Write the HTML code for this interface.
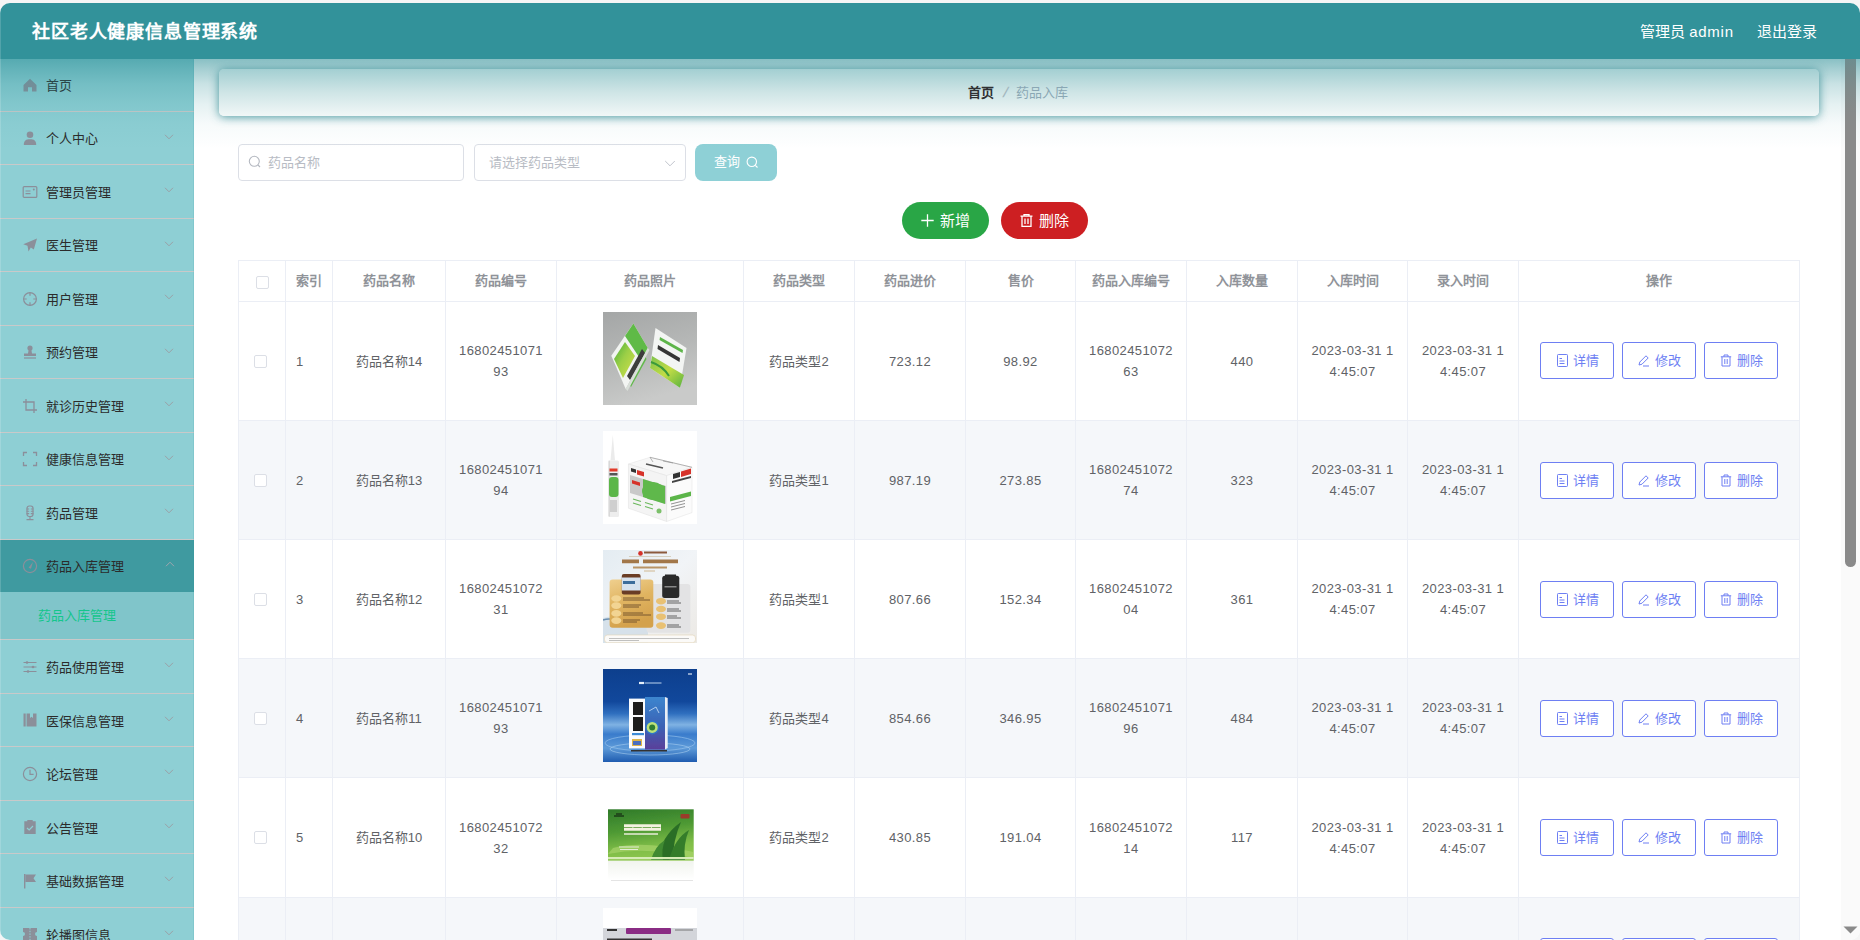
<!DOCTYPE html>
<html lang="zh-CN"><head><meta charset="utf-8"><title>社区老人健康信息管理系统</title>
<style>
*{box-sizing:border-box;margin:0;padding:0}
html,body{width:1860px;height:940px;overflow:hidden;background:#f5f5f5;font-family:"Liberation Sans",sans-serif;}
.a{position:absolute}
#app{position:absolute;left:0;top:3px;width:1860px;height:937px;border-radius:10px;overflow:hidden;background:#fff}
#hdr{position:absolute;left:0;top:0;width:1860px;height:56px;background:#32929a;z-index:5}
#title{position:absolute;left:32px;top:17.8px;font-size:18px;letter-spacing:.85px;font-weight:bold;color:#fff;line-height:22px;white-space:nowrap;text-shadow:0 0 1px rgba(255,255,255,.3)}
.hr{position:absolute;top:19px;font-size:15px;color:#fff;line-height:20px;white-space:nowrap}
#side{position:absolute;left:0;top:56px;width:194px;height:881px;background:#8ecfd4;overflow:hidden}
.mi{position:absolute;left:0;width:194px}
.mt{position:absolute;left:46px;font-size:13px;color:#2b2b2b;line-height:16px;white-space:nowrap}
.sep{position:absolute;left:0;width:194px;height:1px;background:#c9c9c9}
.ico{position:absolute;left:22px;width:16px;height:16px}
.chev{position:absolute;left:164px;width:10px;height:6px}
#main{position:absolute;left:194px;top:56px;width:1647px;height:881px;background:#fff;overflow:hidden}
.shade{position:absolute;left:0;top:56px;width:1860px;height:110px;z-index:4;pointer-events:none;
 background:linear-gradient(to bottom,rgba(40,140,148,.55) 0px,rgba(40,140,148,.42) 10px,rgba(40,140,148,.25) 25px,rgba(40,140,148,.12) 45px,rgba(40,140,148,.04) 65px,rgba(40,140,148,0) 90px)}
#bc{position:absolute;left:25px;top:10px;width:1600px;height:47px;border-radius:5px;
 background:linear-gradient(to bottom,#a3cfd2 0%,#cfe5e6 50%,#f1f7f7 100%);box-shadow:0 1px 10px rgba(45,135,145,.85);z-index:6}
.inp{position:absolute;border:1px solid #dcdfe6;border-radius:4px;background:#fff;height:37px}
.ph{position:absolute;font-size:13px;color:#b8bcc4;line-height:16px;white-space:nowrap}
.btn{position:absolute;height:37px;color:#fff;font-size:13px;line-height:16px;white-space:nowrap}
.th{position:absolute;font-size:13px;font-weight:bold;color:#909399;line-height:16px;white-space:nowrap;text-align:center}
.td{position:absolute;font-size:13px;color:#606266;line-height:21px;white-space:nowrap;text-align:center}
.num{letter-spacing:.4px}
.vl{position:absolute;width:1px;background:#ebeef5}
.hl{position:absolute;height:1px;background:#ebeef5}
.cb{position:absolute;width:14px;height:14px;border:1px solid #dcdfe6;border-radius:2px;background:#fff}
.ob{position:absolute;width:74px;height:37px;border:1px solid #6e7ff3;border-radius:3px;background:#fff;color:#6e7ff3;font-size:13px;line-height:16px;white-space:nowrap}
</style></head><body>
<div id="app">

<div class="a" style="left:0;top:0;width:1px;height:937px;background:rgba(255,255,255,.16);z-index:9"></div>
<div id="hdr"><div id="title">社区老人健康信息管理系统</div>
<div class="hr" style="left:1640px">管理员 <span style="letter-spacing:.75px">admin</span></div><div class="hr" style="left:1757px">退出登录</div></div>
<div id="side">
<svg class="ico" style="top:18.0px;left:22px" viewBox="0 0 16 16"><path d="M1.5 8 L8 1.8 L14.5 8 V14.5 H10 V10.2 H6 V14.5 H1.5Z" fill="#8b8f9a"/></svg>
<div class="mt" style="top:18.5px">首页</div>
<div class="sep" style="top:52.00px"></div>
<svg class="ico" style="top:71.0px;left:22px" viewBox="0 0 16 16"><circle cx="8" cy="4.8" r="3.3" fill="#8b8f9a"/><path d="M1.8 15 C1.8 10.5 4 9.3 8 9.3 C12 9.3 14.2 10.5 14.2 15Z" fill="#8b8f9a"/></svg>
<div class="mt" style="top:72.0px">个人中心</div>
<svg class="chev" style="top:74.8px;left:164px" viewBox="0 0 10 6"><path d="M1 0.8 L5 4.8 L9 0.8" fill="none" stroke="#9aa0a6" stroke-width="1"/></svg>
<div class="sep" style="top:105.00px"></div>
<svg class="ico" style="top:124.5px;left:22px" viewBox="0 0 16 16"><rect x="1.2" y="2.6" width="13.6" height="10.8" rx="1" fill="none" stroke="#8b8f9a" stroke-width="1.2"/><path d="M3.5 7h5M3.5 9.6h5" stroke="#8b8f9a" stroke-width="1.1"/><circle cx="11.8" cy="5.6" r="1" fill="#8b8f9a"/></svg>
<div class="mt" style="top:125.5px">管理员管理</div>
<svg class="chev" style="top:128.3px;left:164px" viewBox="0 0 10 6"><path d="M1 0.8 L5 4.8 L9 0.8" fill="none" stroke="#9aa0a6" stroke-width="1"/></svg>
<div class="sep" style="top:159.00px"></div>
<svg class="ico" style="top:178.0px;left:22px" viewBox="0 0 16 16"><path d="M15 1.5 L1.3 7.2 L5.5 8.8 L6.5 14.5 L8.8 10.5 L11.8 12.5Z" fill="#8b8f9a"/></svg>
<div class="mt" style="top:179.0px">医生管理</div>
<svg class="chev" style="top:181.8px;left:164px" viewBox="0 0 10 6"><path d="M1 0.8 L5 4.8 L9 0.8" fill="none" stroke="#9aa0a6" stroke-width="1"/></svg>
<div class="sep" style="top:212.00px"></div>
<svg class="ico" style="top:231.5px;left:22px" viewBox="0 0 16 16"><circle cx="8" cy="8" r="6.4" fill="none" stroke="#8b8f9a" stroke-width="1.2"/><path d="M8 1.5v3.2M8 11.3v3.2M1.5 8h3.2M11.3 8h3.2" stroke="#8b8f9a" stroke-width="1.2"/></svg>
<div class="mt" style="top:232.5px">用户管理</div>
<svg class="chev" style="top:235.3px;left:164px" viewBox="0 0 10 6"><path d="M1 0.8 L5 4.8 L9 0.8" fill="none" stroke="#9aa0a6" stroke-width="1"/></svg>
<div class="sep" style="top:266.00px"></div>
<svg class="ico" style="top:285.0px;left:22px" viewBox="0 0 16 16"><circle cx="8" cy="4" r="2.6" fill="#8b8f9a"/><path d="M6.6 6 H9.4 L10 9.6 H14 V12 H2 V9.6 H6Z" fill="#8b8f9a"/><rect x="2" y="13.4" width="12" height="1.2" fill="#8b8f9a"/></svg>
<div class="mt" style="top:286.0px">预约管理</div>
<svg class="chev" style="top:288.8px;left:164px" viewBox="0 0 10 6"><path d="M1 0.8 L5 4.8 L9 0.8" fill="none" stroke="#9aa0a6" stroke-width="1"/></svg>
<div class="sep" style="top:319.00px"></div>
<svg class="ico" style="top:338.5px;left:22px" viewBox="0 0 16 16"><path d="M4 1v11h11M1 4h11v11" fill="none" stroke="#8b8f9a" stroke-width="1.3"/></svg>
<div class="mt" style="top:339.5px">就诊历史管理</div>
<svg class="chev" style="top:342.3px;left:164px" viewBox="0 0 10 6"><path d="M1 0.8 L5 4.8 L9 0.8" fill="none" stroke="#9aa0a6" stroke-width="1"/></svg>
<div class="sep" style="top:373.00px"></div>
<svg class="ico" style="top:392.0px;left:22px" viewBox="0 0 16 16"><path d="M1.5 5V1.5H5M11 1.5h3.5V5M14.5 11v3.5H11M5 14.5H1.5V11" fill="none" stroke="#8b8f9a" stroke-width="1.3"/></svg>
<div class="mt" style="top:393.0px">健康信息管理</div>
<svg class="chev" style="top:395.8px;left:164px" viewBox="0 0 10 6"><path d="M1 0.8 L5 4.8 L9 0.8" fill="none" stroke="#9aa0a6" stroke-width="1"/></svg>
<div class="sep" style="top:426.00px"></div>
<svg class="ico" style="top:445.5px;left:22px" viewBox="0 0 16 16"><rect x="5" y="1" width="6" height="10.5" rx="2.2" fill="none" stroke="#8b8f9a" stroke-width="1.2"/><path d="M4.6 4h2.6M4.6 6.3h2.6M4.6 8.6h2.6M8.8 4h2.6M8.8 6.3h2.6M8.8 8.6h2.6M8 11.5v2.6M4.5 14.6h7" stroke="#8b8f9a" stroke-width="1.1"/></svg>
<div class="mt" style="top:446.5px">药品管理</div>
<svg class="chev" style="top:449.3px;left:164px" viewBox="0 0 10 6"><path d="M1 0.8 L5 4.8 L9 0.8" fill="none" stroke="#9aa0a6" stroke-width="1"/></svg>
<div class="sep" style="top:480.00px"></div>
<div class="mi" style="top:481.00px;height:52.00px;background:#3f9aa0"></div>
<svg class="ico" style="top:499.0px;left:22px" viewBox="0 0 16 16"><circle cx="8" cy="8" r="6.6" fill="none" stroke="#8b8f9a" stroke-width="1.2"/><path d="M10.9 4.1 L9 10.8 L6.6 9.8Z" fill="#8b8f9a"/></svg>
<div class="mt" style="top:500.0px">药品入库管理</div>
<svg class="chev" style="top:501.5px;left:165px" viewBox="0 0 10 6"><path d="M1 5.2 L5 1.2 L9 5.2" fill="none" stroke="#9ea6ae" stroke-width="1"/></svg>
<div class="mi" style="top:533.00px;height:47.00px;background:#80c5ca"></div>
<div class="mt" style="left:38px;top:548.5px;color:#14c68c">药品入库管理</div>
<div class="sep" style="top:580.00px"></div>
<svg class="ico" style="top:599.5px;left:22px" viewBox="0 0 16 16"><path d="M1.5 3.5h13M1.5 8h13M1.5 12.5h13" stroke="#8b8f9a" stroke-width="1.1"/><circle cx="5" cy="3.5" r="1.3" fill="#8b8f9a"/><circle cx="11" cy="8" r="1.3" fill="#8b8f9a"/><circle cx="6" cy="12.5" r="1.3" fill="#8b8f9a"/></svg>
<div class="mt" style="top:601.0px">药品使用管理</div>
<svg class="chev" style="top:603.3px;left:164px" viewBox="0 0 10 6"><path d="M1 0.8 L5 4.8 L9 0.8" fill="none" stroke="#9aa0a6" stroke-width="1"/></svg>
<div class="sep" style="top:634.00px"></div>
<svg class="ico" style="top:653.0px;left:22px" viewBox="0 0 16 16"><rect x="1.5" y="1.5" width="2.2" height="13" fill="#8b8f9a"/><path d="M4.6 1.5 H8 V6 L9.5 4.8 L11 6 V1.5 H14.5 V14.5 H4.6Z" fill="#8b8f9a"/></svg>
<div class="mt" style="top:654.5px">医保信息管理</div>
<svg class="chev" style="top:656.8px;left:164px" viewBox="0 0 10 6"><path d="M1 0.8 L5 4.8 L9 0.8" fill="none" stroke="#9aa0a6" stroke-width="1"/></svg>
<div class="sep" style="top:687.00px"></div>
<svg class="ico" style="top:706.5px;left:22px" viewBox="0 0 16 16"><circle cx="8" cy="8" r="6.6" fill="none" stroke="#8b8f9a" stroke-width="1.2"/><path d="M8 3.8V8.3H11.6" fill="none" stroke="#8b8f9a" stroke-width="1.2"/></svg>
<div class="mt" style="top:708.0px">论坛管理</div>
<svg class="chev" style="top:710.3px;left:164px" viewBox="0 0 10 6"><path d="M1 0.8 L5 4.8 L9 0.8" fill="none" stroke="#9aa0a6" stroke-width="1"/></svg>
<div class="sep" style="top:741.00px"></div>
<svg class="ico" style="top:760.0px;left:22px" viewBox="0 0 16 16"><path d="M2.3 2.3H5.3V1H10.7V2.3H13.7V15H2.3Z" fill="#8b8f9a"/><path d="M5 9 L7.2 11 L11 7" fill="none" stroke="#8ecfd4" stroke-width="1.2"/></svg>
<div class="mt" style="top:761.5px">公告管理</div>
<svg class="chev" style="top:763.8px;left:164px" viewBox="0 0 10 6"><path d="M1 0.8 L5 4.8 L9 0.8" fill="none" stroke="#9aa0a6" stroke-width="1"/></svg>
<div class="sep" style="top:794.00px"></div>
<svg class="ico" style="top:813.5px;left:22px" viewBox="0 0 16 16"><rect x="2" y="1" width="1.4" height="14.5" fill="#8b8f9a"/><path d="M3.4 1.5H14L11.5 5.2L14 9H3.4Z" fill="#8b8f9a"/></svg>
<div class="mt" style="top:815.0px">基础数据管理</div>
<svg class="chev" style="top:817.3px;left:164px" viewBox="0 0 10 6"><path d="M1 0.8 L5 4.8 L9 0.8" fill="none" stroke="#9aa0a6" stroke-width="1"/></svg>
<div class="sep" style="top:848.00px"></div>
<svg class="ico" style="top:867.0px;left:22px" viewBox="0 0 16 16"><path d="M1 2h14v4a2 2 0 0 0 0 4v4H1v-4a2 2 0 0 0 0-4Z" fill="#8b8f9a"/><path d="M8 2v12" stroke="#8ecfd4" stroke-width="1" stroke-dasharray="1.5 1.2"/></svg>
<div class="mt" style="top:868.5px">轮播图信息</div>
<svg class="chev" style="top:870.8px;left:164px" viewBox="0 0 10 6"><path d="M1 0.8 L5 4.8 L9 0.8" fill="none" stroke="#9aa0a6" stroke-width="1"/></svg>
<div class="sep" style="top:901.00px"></div>
<div class="a" style="left:193px;top:0;width:1px;height:881px;background:rgba(40,150,160,.12)"></div>
</div>
<div id="main">
<div id="bc"><div class="a" style="left:-1px;width:1600px;top:14.5px;text-align:center;font-size:13px;line-height:16px;white-space:nowrap"><b style="color:#303133">首页</b><span style="color:#a3b8bf;margin:0 9px 0 10px;font-size:14px;display:inline-block;transform:skewX(-12deg) scaleX(1.3)">/</span><span style="color:#8aa7b4">药品入库</span></div></div>
<div class="inp" style="left:44px;top:85px;width:226px"></div>
<svg class="a" style="left:54px;top:96px;width:14px;height:14px" viewBox="0 0 14 14"><circle cx="6.3" cy="6.3" r="5" fill="none" stroke="#b4b8c0" stroke-width="1.1"/><path d="M10 10 L12 12" stroke="#b4b8c0" stroke-width="1.1"/></svg>
<div class="ph" style="left:74px;top:96px">药品名称</div>
<div class="inp" style="left:280px;top:85px;width:212px"></div>
<div class="ph" style="left:295px;top:96px">请选择药品类型</div>
<svg class="a" style="left:470px;top:101px;width:12px;height:7px" viewBox="0 0 12 7"><path d="M1.2 1 L6 5.8 L10.8 1" fill="none" stroke="#c0c4cc" stroke-width="1"/></svg>
<div class="btn" style="left:501px;top:85px;width:82px;border-radius:8px;background:#8ed0d6"><span class="a" style="left:19px;top:10px">查询</span><svg class="a" style="left:51px;top:12px;width:13px;height:13px" viewBox="0 0 13 13"><circle cx="5.8" cy="5.8" r="4.7" fill="none" stroke="#fff" stroke-width="1.1"/><path d="M9.3 9.3 L11.5 11.5" stroke="#fff" stroke-width="1.1"/></svg></div>
<div class="btn" style="left:708px;top:143px;width:87px;border-radius:19px;background:#29a646"><svg class="a" style="left:19px;top:12px;width:13px;height:13px" viewBox="0 0 13 13"><path d="M6.5 0.3V12.7M0.3 6.5H12.7" stroke="#fff" stroke-width="1.3"/></svg><span class="a" style="left:38px;top:10px;font-size:15px;line-height:17px">新增</span></div>
<div class="btn" style="left:807px;top:143px;width:87px;border-radius:19px;background:#cd1f22"><svg class="a" style="left:19px;top:12px;width:13px;height:13px" viewBox="0 0 13 13"><path d="M0.5 2.2H12.5M4 2.2V0.7H9V2.2M2 2.2V12.3H11V2.2M5 4.5V10M8 4.5V10" fill="none" stroke="#fff" stroke-width="1.3"/></svg><span class="a" style="left:38px;top:10px;font-size:15px;line-height:17px">删除</span></div>
<div class="a" style="left:44px;top:242px;width:1562px;height:119px;background:#fff"></div>
<div class="a" style="left:44px;top:361px;width:1562px;height:119px;background:#f5f7fa"></div>
<div class="a" style="left:44px;top:480px;width:1562px;height:119px;background:#fff"></div>
<div class="a" style="left:44px;top:599px;width:1562px;height:119px;background:#f5f7fa"></div>
<div class="a" style="left:44px;top:718px;width:1562px;height:120px;background:#fff"></div>
<div class="a" style="left:44px;top:838px;width:1562px;height:119px;background:#f5f7fa"></div>
<div class="hl" style="left:44px;top:201px;width:1562px"></div>
<div class="hl" style="left:44px;top:242px;width:1562px"></div>
<div class="hl" style="left:44px;top:361px;width:1562px"></div>
<div class="hl" style="left:44px;top:480px;width:1562px"></div>
<div class="hl" style="left:44px;top:599px;width:1562px"></div>
<div class="hl" style="left:44px;top:718px;width:1562px"></div>
<div class="hl" style="left:44px;top:838px;width:1562px"></div>
<div class="hl" style="left:44px;top:957px;width:1562px"></div>
<div class="vl" style="left:44px;top:201px;height:680px"></div>
<div class="vl" style="left:91px;top:201px;height:680px"></div>
<div class="vl" style="left:138px;top:201px;height:680px"></div>
<div class="vl" style="left:251px;top:201px;height:680px"></div>
<div class="vl" style="left:362px;top:201px;height:680px"></div>
<div class="vl" style="left:549px;top:201px;height:680px"></div>
<div class="vl" style="left:660px;top:201px;height:680px"></div>
<div class="vl" style="left:771px;top:201px;height:680px"></div>
<div class="vl" style="left:881px;top:201px;height:680px"></div>
<div class="vl" style="left:992px;top:201px;height:680px"></div>
<div class="vl" style="left:1103px;top:201px;height:680px"></div>
<div class="vl" style="left:1213px;top:201px;height:680px"></div>
<div class="vl" style="left:1324px;top:201px;height:680px"></div>
<div class="vl" style="left:1605px;top:201px;height:680px"></div>
<div class="cb" style="left:62px;top:217px;width:13px;height:13px"></div>
<div class="th" style="left:102px;top:214px">索引</div>
<div class="th" style="left:139px;top:214px;width:112px">药品名称</div>
<div class="th" style="left:252px;top:214px;width:110px">药品编号</div>
<div class="th" style="left:363px;top:214px;width:186px">药品照片</div>
<div class="th" style="left:550px;top:214px;width:110px">药品类型</div>
<div class="th" style="left:661px;top:214px;width:110px">药品进价</div>
<div class="th" style="left:772px;top:214px;width:109px">售价</div>
<div class="th" style="left:882px;top:214px;width:110px">药品入库编号</div>
<div class="th" style="left:993px;top:214px;width:110px">入库数量</div>
<div class="th" style="left:1104px;top:214px;width:109px">入库时间</div>
<div class="th" style="left:1214px;top:214px;width:110px">录入时间</div>
<div class="th" style="left:1325px;top:214px;width:280px">操作</div>
<div class="cb" style="left:60px;top:295.5px;width:13px;height:13px"></div>
<div class="td" style="left:102px;top:291.5px;text-align:left">1</div>
<div class="td" style="left:139px;top:291.5px;width:112px">药品名称14</div>
<div class="td num" style="left:252px;top:281.0px;width:110px">16802451071<br>93</div>
<div class="a" style="left:409px;top:252.5px;width:94px;height:93px;overflow:hidden"><svg width="94" height="93" viewBox="0 0 94 93"><defs><linearGradient id="g0" x1="0" y1="0" x2="0.3" y2="1"><stop offset="0" stop-color="#a4a6a6"/><stop offset="0.55" stop-color="#b6b8b7"/><stop offset="1" stop-color="#c9cac9"/></linearGradient>
<linearGradient id="g0b" x1="0" y1="0" x2="1" y2="1"><stop offset="0" stop-color="#46ad3c"/><stop offset="0.45" stop-color="#9ccf46"/><stop offset="1" stop-color="#d6e24a"/></linearGradient>
<linearGradient id="g0c" x1="1" y1="1" x2="0" y2="0"><stop offset="0" stop-color="#56b140"/><stop offset="0.5" stop-color="#c2dc45"/><stop offset="1" stop-color="#7dc34c"/></linearGradient><filter id="bl0" x="-5%" y="-5%" width="110%" height="110%"><feGaussianBlur stdDeviation="0.45"/></filter></defs>
<rect width="94" height="93" fill="url(#g0)"/><g filter="url(#bl0)">

<path d="M30.4 11.6 L44.8 35.9 L22.7 76.9 L8.3 43.7Z" fill="#f2f4f2"/>
<path d="M30.4 11.6 L44.8 35.9 L38 48 L22 24Z" fill="#5fba46"/>
<path d="M11 47 L22 30 L32 44 L20 66Z" fill="url(#g0b)"/>
<path d="M24 64 L39 37 L42 41 L27 68Z" fill="#3c3c3c"/>
<path d="M26 72 L42 44 L43.5 47 L28 75Z" fill="#62b84c"/>
<path d="M22.7 76.9 L44.8 35.9 L46.5 38 L24.5 79Z" fill="#d9dfd9"/>
<path d="M52.5 16 L83.5 35.9 L76.9 75.8 L47 55.9Z" fill="#f3f5f3"/>
<path d="M49 44 L81 63 L76.9 75.8 L47 55.9Z" fill="url(#g0c)"/>
<path d="M57 25 L80 38 L79.5 41 L56.5 28Z" fill="#5db54a"/>
<path d="M55 33 L77 46 L76.5 50 L54.5 37Z" fill="#363636"/>
<path d="M48 50 Q60 54 66 64" stroke="#3a9a3a" stroke-width="2" fill="none"/></g></svg></div>
<div class="td" style="left:550px;top:291.5px;width:110px">药品类型2</div>
<div class="td num" style="left:661px;top:291.5px;width:110px">723.12</div>
<div class="td num" style="left:772px;top:291.5px;width:109px">98.92</div>
<div class="td num" style="left:882px;top:281.0px;width:110px">16802451072<br>63</div>
<div class="td num" style="left:993px;top:291.5px;width:110px">440</div>
<div class="td num" style="left:1104px;top:281.0px;width:109px">2023-03-31 1<br>4:45:07</div>
<div class="td num" style="left:1214px;top:281.0px;width:110px">2023-03-31 1<br>4:45:07</div>
<div class="ob" style="left:1346px;top:283px"><svg class="a" style="left:16px;top:11px;width:11px;height:13px" viewBox="0 0 11 13"><rect x="0.5" y="0.5" width="10" height="12" rx="0.8" fill="none" stroke="#6e7ff3" stroke-width="1"/><path d="M2.5 4.5h2.5M2.5 7h5M2.5 9.5h5" stroke="#6e7ff3" stroke-width="1"/></svg><span class="a" style="left:32px;top:10px">详情</span></div>
<div class="ob" style="left:1428px;top:283px"><svg class="a" style="left:14px;top:11px;width:13px;height:13px" viewBox="0 0 13 13"><path d="M2 11 L2.8 8 L9 1.8 L11.2 4 L5 10.2Z" fill="none" stroke="#6e7ff3" stroke-width="1"/><path d="M6 12h6" stroke="#6e7ff3" stroke-width="1"/></svg><span class="a" style="left:32px;top:10px">修改</span></div>
<div class="ob" style="left:1510px;top:283px"><svg class="a" style="left:15px;top:11px;width:12px;height:13px" viewBox="0 0 12 13"><path d="M0.8 2.8H11.2M4 2.8V1H8V2.8M2 2.8V12H10V2.8M4.8 5V10M7.2 5V10" fill="none" stroke="#6e7ff3" stroke-width="1"/></svg><span class="a" style="left:32px;top:10px">删除</span></div>
<div class="cb" style="left:60px;top:414.5px;width:13px;height:13px"></div>
<div class="td" style="left:102px;top:410.5px;text-align:left">2</div>
<div class="td" style="left:139px;top:410.5px;width:112px">药品名称13</div>
<div class="td num" style="left:252px;top:400.0px;width:110px">16802451071<br>94</div>
<div class="a" style="left:409px;top:371.5px;width:94px;height:93px;overflow:hidden"><svg width="94" height="93" viewBox="0 0 94 93"><defs><filter id="bl1" x="-5%" y="-5%" width="110%" height="110%"><feGaussianBlur stdDeviation="0.45"/></filter></defs><rect width="94" height="93" fill="#fff"/><g filter="url(#bl1)">
<path d="M9.8 4 L12 29.6 L7.5 29.6Z" fill="#ebebeb"/><rect x="5.5" y="29.6" width="10.5" height="56.4" rx="1.5" fill="#ededed"/><rect x="5.5" y="29.6" width="1.5" height="56" fill="#d9d9d9"/>
<rect x="6.5" y="37.5" width="8" height="3" fill="#e23a2a"/><rect x="6.5" y="42" width="8" height="2.5" fill="#555"/><rect x="6" y="46" width="9.5" height="20" rx="3" fill="#5cb64a"/><rect x="7" y="69" width="7" height="12" fill="#cfcfcf"/>
<path d="M25.4 33 L47 26.3 L89 36.3 L63.6 44.6Z" fill="#f7f7f7" stroke="#e2e2e2" stroke-width="0.5"/>
<path d="M25.4 33 L63.6 44.6 L63.6 90.5 L25.4 77.2Z" fill="#f4f4f4" stroke="#dedede" stroke-width="0.5"/>
<path d="M63.6 44.6 L89 36.3 L89 81.6 L63.6 90.5Z" fill="#fbfbfb" stroke="#e0e0e0" stroke-width="0.5"/>
<path d="M27 44 L63 55 L63 73 L27 62Z" fill="#c9c9c9"/><path d="M40 48 L62 55 L62 73 L40 66Z" fill="#5fb84c"/><ellipse cx="50" cy="60" rx="11" ry="9" fill="#5fb84c"/>
<path d="M28 37 L33 38.5 L33 42 L28 40.5Z" fill="#333"/><path d="M34 39 L41 41 L41 45.5 L34 43.5Z" fill="#d6332a"/><path d="M29 49 L37 51.5 L37 55 L29 52.5Z" fill="#d6332a"/>
<path d="M70 43 L77 41 L77 46 L70 48Z" fill="#333"/><path d="M78 40.5 L88 37.5 L88 43 L78 46Z" fill="#d6332a"/><path d="M69 50 L88 45 L88 47 L69 52Z" fill="#444"/>
<path d="M67 66 L88 60.5 L88 65 L67 70.5Z" fill="#5cb54a"/><path d="M68 73 L82 69.5 M68 76 L82 72.5 M68 79 L82 75.5" stroke="#777" stroke-width="0.8"/>
<path d="M30 68 L38 70.5 M42 71.5 L50 74 M30 72 L38 74.5 M42 75.5 L50 78" stroke="#6bb85c" stroke-width="1.2"/><circle cx="56" cy="80" r="2.5" fill="#7cc06a"/>
<path d="M47 26.3 L89 36.3 M47 26.3 L50 31 M60 30 L70 32" stroke="#888" stroke-width="0.6"/><path d="M43 33 L60 37" stroke="#555" stroke-width="1.5"/></g></svg></div>
<div class="td" style="left:550px;top:410.5px;width:110px">药品类型1</div>
<div class="td num" style="left:661px;top:410.5px;width:110px">987.19</div>
<div class="td num" style="left:772px;top:410.5px;width:109px">273.85</div>
<div class="td num" style="left:882px;top:400.0px;width:110px">16802451072<br>74</div>
<div class="td num" style="left:993px;top:410.5px;width:110px">323</div>
<div class="td num" style="left:1104px;top:400.0px;width:109px">2023-03-31 1<br>4:45:07</div>
<div class="td num" style="left:1214px;top:400.0px;width:110px">2023-03-31 1<br>4:45:07</div>
<div class="ob" style="left:1346px;top:403px"><svg class="a" style="left:16px;top:11px;width:11px;height:13px" viewBox="0 0 11 13"><rect x="0.5" y="0.5" width="10" height="12" rx="0.8" fill="none" stroke="#6e7ff3" stroke-width="1"/><path d="M2.5 4.5h2.5M2.5 7h5M2.5 9.5h5" stroke="#6e7ff3" stroke-width="1"/></svg><span class="a" style="left:32px;top:10px">详情</span></div>
<div class="ob" style="left:1428px;top:403px"><svg class="a" style="left:14px;top:11px;width:13px;height:13px" viewBox="0 0 13 13"><path d="M2 11 L2.8 8 L9 1.8 L11.2 4 L5 10.2Z" fill="none" stroke="#6e7ff3" stroke-width="1"/><path d="M6 12h6" stroke="#6e7ff3" stroke-width="1"/></svg><span class="a" style="left:32px;top:10px">修改</span></div>
<div class="ob" style="left:1510px;top:403px"><svg class="a" style="left:15px;top:11px;width:12px;height:13px" viewBox="0 0 12 13"><path d="M0.8 2.8H11.2M4 2.8V1H8V2.8M2 2.8V12H10V2.8M4.8 5V10M7.2 5V10" fill="none" stroke="#6e7ff3" stroke-width="1"/></svg><span class="a" style="left:32px;top:10px">删除</span></div>
<div class="cb" style="left:60px;top:533.5px;width:13px;height:13px"></div>
<div class="td" style="left:102px;top:529.5px;text-align:left">3</div>
<div class="td" style="left:139px;top:529.5px;width:112px">药品名称12</div>
<div class="td num" style="left:252px;top:519.0px;width:110px">16802451072<br>31</div>
<div class="a" style="left:409px;top:490.5px;width:94px;height:93px;overflow:hidden"><svg width="94" height="93" viewBox="0 0 94 93"><defs><linearGradient id="g2" x1="0" y1="0" x2="1" y2="1"><stop offset="0" stop-color="#e4ecf2"/><stop offset="0.5" stop-color="#f1f4f7"/><stop offset="1" stop-color="#ece9e4"/></linearGradient>
<linearGradient id="g2g" x1="0" y1="0" x2="0.3" y2="1"><stop offset="0" stop-color="#efcf8e"/><stop offset="0.5" stop-color="#e0b461"/><stop offset="1" stop-color="#d4a14c"/></linearGradient><filter id="bl2" x="-5%" y="-5%" width="110%" height="110%"><feGaussianBlur stdDeviation="0.45"/></filter></defs><rect width="94" height="93" fill="url(#g2)"/><g filter="url(#bl2)">
<path d="M0 68 Q20 62 45 78 L45 93 L0 93Z" fill="#c5d5e2" opacity="0.6"/><path d="M0 70 Q10 67 20 74" stroke="#6c8fb0" stroke-width="1.5" fill="none"/>
<circle cx="37.5" cy="3.4" r="2.3" fill="#d5322b"/><path d="M41 2.5h23" stroke="#8c5a3c" stroke-width="2"/><path d="M26 6.5h42" stroke="#c8b89a" stroke-width="0.6"/>
<path d="M19 11.4h17M40 11.4h35" stroke="#a2774a" stroke-width="3.6"/><path d="M30 17.5h34" stroke="#b99466" stroke-width="2.2"/><path d="M41 21h11" stroke="#c9a97a" stroke-width="0.8"/>
<rect x="43.7" y="34" width="43.7" height="48.7" rx="3" fill="#e3e3e4"/><rect x="6.6" y="29.6" width="43.7" height="48.2" rx="3" fill="url(#g2g)"/>
<rect x="18.8" y="24" width="18.8" height="20.6" rx="2" fill="#6a3d25"/><rect x="18.8" y="27.5" width="18.8" height="13" fill="#d7e2ee"/><rect x="20" y="31" width="12" height="3" fill="#3d6d9b"/>
<rect x="59.2" y="25.8" width="17.1" height="22.1" rx="2.5" fill="#2b2b2b"/><rect x="62" y="24.5" width="11" height="3" fill="#2b2b2b"/><rect x="61.5" y="36" width="12" height="1.5" fill="#888"/>
<g fill="#f2d493"><ellipse cx="13.3" cy="48.5" rx="5" ry="3.3"/><ellipse cx="13.3" cy="55.6" rx="5" ry="3.3"/><ellipse cx="13.3" cy="63.4" rx="5" ry="3.3"/><ellipse cx="13.3" cy="70.6" rx="5" ry="3.3"/></g>
<g fill="#e9c173"><ellipse cx="58" cy="51.2" rx="5" ry="3.3"/><ellipse cx="58" cy="59" rx="5" ry="3.3"/><ellipse cx="58" cy="66.7" rx="5" ry="3.3"/><ellipse cx="58" cy="75.6" rx="5" ry="3.3"/></g>
<path d="M20 48h21M20 50h27M20 55h18M20 57h16M20 63h20M20 65h28M20 70h17M20 72h14" stroke="#6d4f2a" stroke-width="0.9"/>
<path d="M64 51h12M64 53h14M64 59h12M64 61h14M64 66h10M64 68h14M64 75h12M64 77h14" stroke="#555" stroke-width="0.9"/>
<rect x="1.5" y="85" width="91" height="7.7" rx="3" fill="#fbfaf8" stroke="#e2d3b5" stroke-width="0.6"/><path d="M6 88.5h80M6 90.5h30" stroke="#999" stroke-width="0.6"/></g></svg></div>
<div class="td" style="left:550px;top:529.5px;width:110px">药品类型1</div>
<div class="td num" style="left:661px;top:529.5px;width:110px">807.66</div>
<div class="td num" style="left:772px;top:529.5px;width:109px">152.34</div>
<div class="td num" style="left:882px;top:519.0px;width:110px">16802451072<br>04</div>
<div class="td num" style="left:993px;top:529.5px;width:110px">361</div>
<div class="td num" style="left:1104px;top:519.0px;width:109px">2023-03-31 1<br>4:45:07</div>
<div class="td num" style="left:1214px;top:519.0px;width:110px">2023-03-31 1<br>4:45:07</div>
<div class="ob" style="left:1346px;top:522px"><svg class="a" style="left:16px;top:11px;width:11px;height:13px" viewBox="0 0 11 13"><rect x="0.5" y="0.5" width="10" height="12" rx="0.8" fill="none" stroke="#6e7ff3" stroke-width="1"/><path d="M2.5 4.5h2.5M2.5 7h5M2.5 9.5h5" stroke="#6e7ff3" stroke-width="1"/></svg><span class="a" style="left:32px;top:10px">详情</span></div>
<div class="ob" style="left:1428px;top:522px"><svg class="a" style="left:14px;top:11px;width:13px;height:13px" viewBox="0 0 13 13"><path d="M2 11 L2.8 8 L9 1.8 L11.2 4 L5 10.2Z" fill="none" stroke="#6e7ff3" stroke-width="1"/><path d="M6 12h6" stroke="#6e7ff3" stroke-width="1"/></svg><span class="a" style="left:32px;top:10px">修改</span></div>
<div class="ob" style="left:1510px;top:522px"><svg class="a" style="left:15px;top:11px;width:12px;height:13px" viewBox="0 0 12 13"><path d="M0.8 2.8H11.2M4 2.8V1H8V2.8M2 2.8V12H10V2.8M4.8 5V10M7.2 5V10" fill="none" stroke="#6e7ff3" stroke-width="1"/></svg><span class="a" style="left:32px;top:10px">删除</span></div>
<div class="cb" style="left:60px;top:652.5px;width:13px;height:13px"></div>
<div class="td" style="left:102px;top:648.5px;text-align:left">4</div>
<div class="td" style="left:139px;top:648.5px;width:112px">药品名称11</div>
<div class="td num" style="left:252px;top:638.0px;width:110px">16802451071<br>93</div>
<div class="a" style="left:409px;top:609.5px;width:94px;height:93px;overflow:hidden"><svg width="94" height="93" viewBox="0 0 94 93"><defs><linearGradient id="g3" x1="0" y1="0" x2="0" y2="1"><stop offset="0" stop-color="#0d3f8d"/><stop offset="0.35" stop-color="#11489c"/><stop offset="0.48" stop-color="#2f6fbf"/><stop offset="0.6" stop-color="#7fb2e3"/><stop offset="0.7" stop-color="#3a7ccc"/><stop offset="0.85" stop-color="#5d9ad8"/><stop offset="1" stop-color="#1f5cb0"/></linearGradient>
<linearGradient id="g3p" x1="0" y1="0" x2="0" y2="1"><stop offset="0" stop-color="#3c86cf"/><stop offset="0.55" stop-color="#3a62b5"/><stop offset="1" stop-color="#5b3f9a"/></linearGradient><filter id="bl3" x="-5%" y="-5%" width="110%" height="110%"><feGaussianBlur stdDeviation="0.45"/></filter></defs><rect width="94" height="93" fill="url(#g3)"/><g filter="url(#bl3)">
<ellipse cx="47" cy="74" rx="45" ry="8" fill="none" stroke="#9cc7ee" stroke-width="1" opacity="0.6"/><ellipse cx="47" cy="80" rx="40" ry="6" fill="none" stroke="#b8d9f5" stroke-width="1" opacity="0.5"/>
<path d="M36 14h5" stroke="#e6f0fa" stroke-width="2.2"/><path d="M41.5 14h17" stroke="#bcd3ee" stroke-width="1"/><path d="M85 5h4" stroke="#dfe8f5" stroke-width="1.2"/>
<path d="M26 29.6 L42 29.6 L42 79.4 L26 79.4Z" fill="#fafbfd"/><path d="M42 28 L62 28 L62 80.5 L42 80.5Z" fill="url(#g3p)"/><path d="M62 28 L64.7 29 L64.7 79 L62 80.5Z" fill="#e9eef6"/>
<rect x="30" y="33" width="10" height="13" fill="#1c1c1c"/><rect x="30" y="48" width="10" height="14" fill="#1c1c1c"/><rect x="29" y="64" width="12" height="2.2" fill="#3d8ad6"/>
<rect x="29" y="70" width="10" height="7" fill="#e0b54a"/><rect x="30" y="72" width="8" height="4" fill="#4b6fc0"/><rect x="28" y="81" width="36" height="1.5" fill="#333"/>
<circle cx="49.2" cy="58.4" r="7" fill="#2f74c7"/><circle cx="49.2" cy="58.4" r="5.5" fill="#bde27a"/><circle cx="49.2" cy="58.4" r="3" fill="#2e7d32"/>
<path d="M46 42 L53 38 L56 44" stroke="#cfe3f7" stroke-width="0.8" fill="none"/></g></svg></div>
<div class="td" style="left:550px;top:648.5px;width:110px">药品类型4</div>
<div class="td num" style="left:661px;top:648.5px;width:110px">854.66</div>
<div class="td num" style="left:772px;top:648.5px;width:109px">346.95</div>
<div class="td num" style="left:882px;top:638.0px;width:110px">16802451071<br>96</div>
<div class="td num" style="left:993px;top:648.5px;width:110px">484</div>
<div class="td num" style="left:1104px;top:638.0px;width:109px">2023-03-31 1<br>4:45:07</div>
<div class="td num" style="left:1214px;top:638.0px;width:110px">2023-03-31 1<br>4:45:07</div>
<div class="ob" style="left:1346px;top:641px"><svg class="a" style="left:16px;top:11px;width:11px;height:13px" viewBox="0 0 11 13"><rect x="0.5" y="0.5" width="10" height="12" rx="0.8" fill="none" stroke="#6e7ff3" stroke-width="1"/><path d="M2.5 4.5h2.5M2.5 7h5M2.5 9.5h5" stroke="#6e7ff3" stroke-width="1"/></svg><span class="a" style="left:32px;top:10px">详情</span></div>
<div class="ob" style="left:1428px;top:641px"><svg class="a" style="left:14px;top:11px;width:13px;height:13px" viewBox="0 0 13 13"><path d="M2 11 L2.8 8 L9 1.8 L11.2 4 L5 10.2Z" fill="none" stroke="#6e7ff3" stroke-width="1"/><path d="M6 12h6" stroke="#6e7ff3" stroke-width="1"/></svg><span class="a" style="left:32px;top:10px">修改</span></div>
<div class="ob" style="left:1510px;top:641px"><svg class="a" style="left:15px;top:11px;width:12px;height:13px" viewBox="0 0 12 13"><path d="M0.8 2.8H11.2M4 2.8V1H8V2.8M2 2.8V12H10V2.8M4.8 5V10M7.2 5V10" fill="none" stroke="#6e7ff3" stroke-width="1"/></svg><span class="a" style="left:32px;top:10px">删除</span></div>
<div class="cb" style="left:60px;top:772.0px;width:13px;height:13px"></div>
<div class="td" style="left:102px;top:768.0px;text-align:left">5</div>
<div class="td" style="left:139px;top:768.0px;width:112px">药品名称10</div>
<div class="td num" style="left:252px;top:757.5px;width:110px">16802451072<br>32</div>
<div class="a" style="left:409px;top:729.0px;width:94px;height:93px;overflow:hidden"><svg width="94" height="93" viewBox="0 0 94 93"><defs><linearGradient id="g4" x1="0" y1="0" x2="0.2" y2="1"><stop offset="0" stop-color="#2f7a2a"/><stop offset="0.45" stop-color="#4f9a34"/><stop offset="0.8" stop-color="#7fbd48"/><stop offset="1" stop-color="#8cc54e"/></linearGradient>
<linearGradient id="g4r" x1="0" y1="0" x2="0" y2="1"><stop offset="0" stop-color="#f1f4ee"/><stop offset="1" stop-color="#ffffff"/></linearGradient><filter id="bl4" x="-5%" y="-5%" width="110%" height="110%"><feGaussianBlur stdDeviation="0.45"/></filter></defs><rect width="94" height="93" fill="#fff"/><g filter="url(#bl4)">
<rect x="5" y="21.3" width="85.7" height="51.5" fill="url(#g4)"/>
<path d="M10 60 Q40 52 90 64 L90 70 Q45 58 5 66Z" fill="#a6d36a" opacity="0.7"/>
<path d="M55 72 Q58 48 78 34 Q70 52 70 72Z" fill="#2c6e26"/><path d="M66 72 Q72 50 86 42 Q80 56 82 72Z" fill="#357d2c"/><path d="M48 72 Q52 58 62 52 Q58 62 60 72Z" fill="#3f8a32"/>
<path d="M21 39.5h37" stroke="#f3f1e0" stroke-width="6.5"/><path d="M21 39.5h37" stroke="#5a9a3a" stroke-width="0.8" stroke-dasharray="8.5 0.8"/><path d="M21 46h34" stroke="#e9ecd9" stroke-width="1.4"/>
<rect x="77.5" y="26" width="9" height="4.5" rx="1" fill="#9a3a2a"/><path d="M11 28h10 M13 26h6" stroke="#1e3d1a" stroke-width="1.5"/>
<path d="M16 59h20M17 61.5h18" stroke="#e3ecd5" stroke-width="1"/>
<rect x="5" y="69" width="85.7" height="2.2" fill="#d8ecb8"/>
<rect x="5" y="72.8" width="85.7" height="19" fill="url(#g4r)"/><path d="M8 92.5h82" stroke="#d2d2d2" stroke-width="0.6"/></g></svg></div>
<div class="td" style="left:550px;top:768.0px;width:110px">药品类型2</div>
<div class="td num" style="left:661px;top:768.0px;width:110px">430.85</div>
<div class="td num" style="left:772px;top:768.0px;width:109px">191.04</div>
<div class="td num" style="left:882px;top:757.5px;width:110px">16802451072<br>14</div>
<div class="td num" style="left:993px;top:768.0px;width:110px">117</div>
<div class="td num" style="left:1104px;top:757.5px;width:109px">2023-03-31 1<br>4:45:07</div>
<div class="td num" style="left:1214px;top:757.5px;width:110px">2023-03-31 1<br>4:45:07</div>
<div class="ob" style="left:1346px;top:760px"><svg class="a" style="left:16px;top:11px;width:11px;height:13px" viewBox="0 0 11 13"><rect x="0.5" y="0.5" width="10" height="12" rx="0.8" fill="none" stroke="#6e7ff3" stroke-width="1"/><path d="M2.5 4.5h2.5M2.5 7h5M2.5 9.5h5" stroke="#6e7ff3" stroke-width="1"/></svg><span class="a" style="left:32px;top:10px">详情</span></div>
<div class="ob" style="left:1428px;top:760px"><svg class="a" style="left:14px;top:11px;width:13px;height:13px" viewBox="0 0 13 13"><path d="M2 11 L2.8 8 L9 1.8 L11.2 4 L5 10.2Z" fill="none" stroke="#6e7ff3" stroke-width="1"/><path d="M6 12h6" stroke="#6e7ff3" stroke-width="1"/></svg><span class="a" style="left:32px;top:10px">修改</span></div>
<div class="ob" style="left:1510px;top:760px"><svg class="a" style="left:15px;top:11px;width:12px;height:13px" viewBox="0 0 12 13"><path d="M0.8 2.8H11.2M4 2.8V1H8V2.8M2 2.8V12H10V2.8M4.8 5V10M7.2 5V10" fill="none" stroke="#6e7ff3" stroke-width="1"/></svg><span class="a" style="left:32px;top:10px">删除</span></div>
<div class="a" style="left:409px;top:848.5px;width:94px;height:93px;overflow:hidden"><svg width="94" height="93" viewBox="0 0 94 93"><rect width="94" height="93" fill="#fff"/><rect x="0" y="20" width="94" height="73" fill="#d3d5da"/><rect x="23" y="20" width="45" height="6" rx="1" fill="#8a2c84"/><path d="M4 22h10" stroke="#333" stroke-width="2"/><path d="M72 22h18" stroke="#777" stroke-width="1"/><path d="M4 32h45" stroke="#333" stroke-width="3"/></svg></div>
<div class="ob" style="left:1346px;top:879px"></div>
<div class="ob" style="left:1428px;top:879px"></div>
<div class="ob" style="left:1510px;top:879px"></div>
</div>
<div class="shade"></div>
<div class="a" style="left:1841px;top:56px;width:19px;height:881px;background:#fafafa;z-index:3"></div>
<div class="a" style="left:1845px;top:56px;width:11px;height:508px;border-radius:0 0 5.5px 5.5px;background:linear-gradient(to bottom,#6d8d8f 0px,#778b8c 14px,#818b8b 32px,#888a8a 55px,#8a8a8a 75px);z-index:7"></div>
<svg class="a" style="left:1843px;top:923px;width:15px;height:8px;z-index:3" viewBox="0 0 15 8"><path d="M0.5 0.5H14.5L7.5 7.5Z" fill="#8a8a8a"/></svg>
</div></body></html>
